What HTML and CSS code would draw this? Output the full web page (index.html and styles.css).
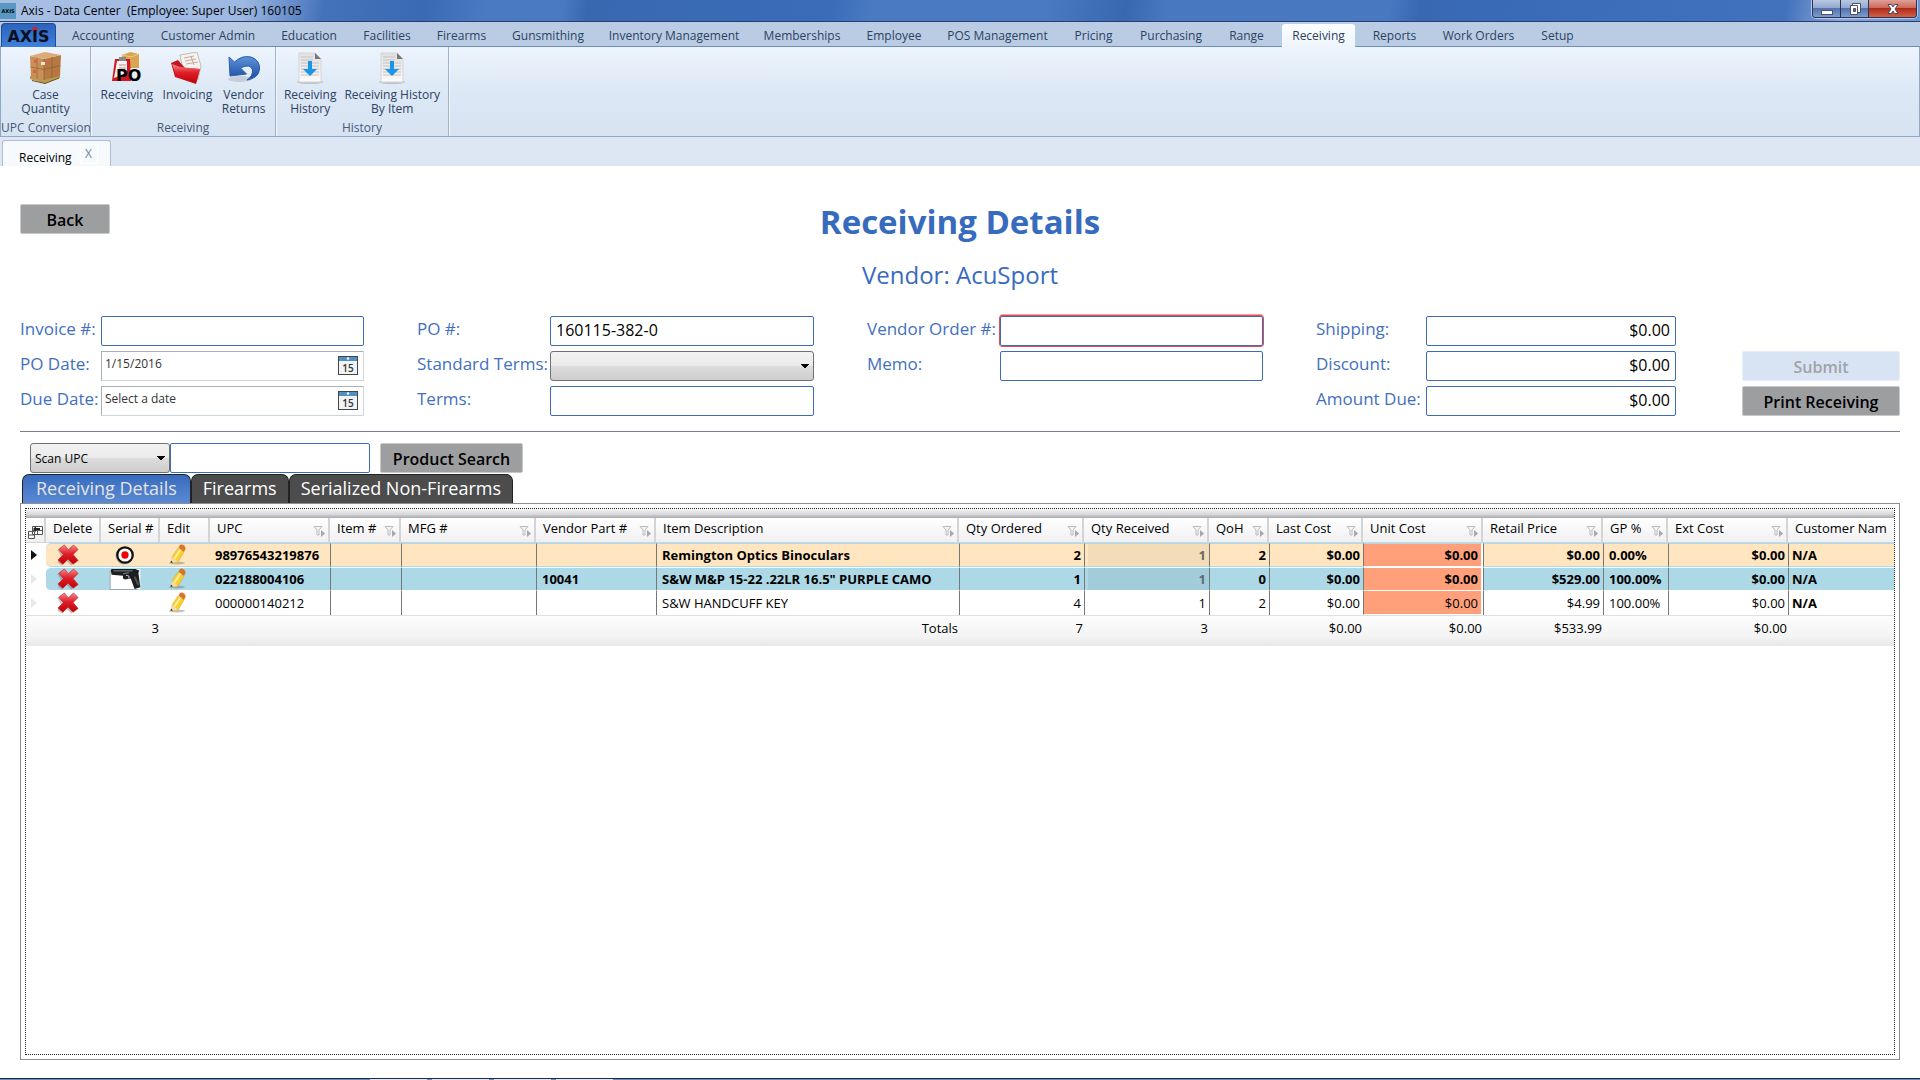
FILE: index.html
```html
<!DOCTYPE html>
<html lang="en">
<head>
    <meta charset="utf-8">
    <title>Axis - Data Center</title>
    <meta name="viewport" content="width=device-width, initial-scale=1">
    <link rel="stylesheet" href="styles.css">
</head>
<body>
    <!-- shared icons -->
    <svg class="defs" width="0" height="0" aria-hidden="true">
        <defs>
            <linearGradient id="gred" x1="0" y1="0" x2="0" y2="1">
                <stop offset="0" stop-color="#f58a90"/><stop offset=".45" stop-color="#e02028"/><stop offset="1" stop-color="#c00008"/>
            </linearGradient>
            <linearGradient id="gblue" x1="0" y1="0" x2="0" y2="1">
                <stop offset="0" stop-color="#5c94dc"/><stop offset="1" stop-color="#1c4a9c"/>
            </linearGradient>
            <linearGradient id="gpage" x1="0" y1="0" x2="0" y2="1">
                <stop offset="0" stop-color="#e0e0e0"/><stop offset="1" stop-color="#fafafa"/>
            </linearGradient>
        </defs>
        <symbol id="filter" viewBox="0 0 12 12">
            <path d="M1 1.500h8L6 5v5H4V5z" fill="#f4f4f4" stroke="#bcbcbc"/>
            <path d="M8 5l4 3.500-4 3.500z" fill="#a8a8a8"/>
        </symbol>
        <symbol id="del" viewBox="0 0 26 24">
            <path d="M3 5l5-4 5 6 5-6 5 4-5 7 5 6-5 4-5-5-5 5-5-3 4-7z" fill="#777" opacity=".45" transform="translate(-1.500 1.500)"/>
            <path d="M3 6L9 1l4.500 5.500L19 1l5 5-5.500 5.500L24 18l-5.500 4L13 16.500 7.500 22 2 17.500l6-6z" fill="url(#gred)" stroke="#cf1c24" stroke-width=".7"/>
        </symbol>
        <symbol id="pencil" viewBox="0 0 20 22">
            <ellipse cx="8" cy="19" rx="8" ry="1.500" fill="#777" opacity=".45"/>
            <path d="M3 13l6-9 6 4-6 10-6 1z" fill="#f9d030" stroke="#e0a820" stroke-width=".6"/>
            <path d="M5.500 14.500l6-9" stroke="#fff0a0" stroke-width="2"/>
            <path d="M9.500 3.500l1.500-2.500q2-1 4 .5t1.500 3.500L15 8z" fill="#dc7426"/>
            <path d="M3 13l-1.500 6L9 18z" fill="#f4dcae"/>
            <path d="M2 16.500L1.500 19 4 18.500z" fill="#333"/>
        </symbol>
        <symbol id="history" viewBox="0 0 32 32">
            <ellipse cx="16" cy="30" rx="13" ry="2" fill="#777" opacity=".35"/>
            <path d="M5 1h16l6 6v23H5z" fill="url(#gpage)" stroke="#d6d6d6"/>
            <path d="M21 1v6h6z" fill="#777"/>
            <path d="M7 5h12M7 8h12M7 11h18M7 14h18M7 17h18M7 20h18M7 23h18" stroke="#c4c4c4"/>
            <path d="M14 9h4v8h5l-7 7-7-7h5z" fill="#1c94e8"/>
        </symbol>
        <symbol id="cal" viewBox="0 0 20 19">
            <rect x=".5" y=".5" width="19" height="18" fill="#f1f3f5" stroke="#444"/>
            <rect x="1" y="1" width="18" height="4" fill="#5090c4"/>
            <circle cx="10" cy="2.500" r="1.200" fill="#fff"/>
            <text x="10" y="15.500" text-anchor="middle" class="cal-day">15</text>
        </symbol>
    </svg>

    <div class="titlebar">
        <span class="app-icon">AXIS</span>
        <span class="app-title">Axis - Data Center&nbsp; (Employee: Super User) 160105</span>
        <div class="win-btns">
            <button class="win-min" aria-label="Minimize"><svg width="12" height="14"><rect x=".5" y="8.500" width="11" height="4" fill="#fff" stroke="#4a5168"/></svg></button>
            <button class="win-max" aria-label="Restore"><svg width="12" height="14"><path d="M3.500 1.500h8v9h-8z" fill="#fff" stroke="#4a5168"/><path d="M1.500 3.500h7v9h-7z" fill="#fff" stroke="#4a5168"/><path d="M4.500 6.500h2v3h-2z" fill="#4a6ca8" stroke="#4a5168"/></svg></button>
            <button class="win-close" aria-label="Close"><svg width="14" height="12"><path d="M2 1.500h3.500L7 4l1.500-2.500H12L9 6l3 4.500H8.500L7 8l-1.500 2.500H2L5 6z" fill="#fff" stroke="#4a4858"/></svg></button>
        </div>
    </div>

    <nav class="menu">
        <a href="#" class="logo">AX<i>I</i>S</a>
        <a href="#">Accounting</a>
        <a href="#">Customer Admin</a>
        <a href="#">Education</a>
        <a href="#">Facilities</a>
        <a href="#">Firearms</a>
        <a href="#">Gunsmithing</a>
        <a href="#">Inventory Management</a>
        <a href="#">Memberships</a>
        <a href="#">Employee</a>
        <a href="#">POS Management</a>
        <a href="#">Pricing</a>
        <a href="#">Purchasing</a>
        <a href="#">Range</a>
        <a href="#" class="active">Receiving</a>
        <a href="#">Reports</a>
        <a href="#">Work Orders</a>
        <a href="#">Setup</a>
    </nav>

    <div class="ribbon">
        <div class="group g-upc">
            <div class="tools">
                <button>
                    <svg width="32" height="32" viewBox="0 0 32 32"><path d="M1 27l15 4.500L31 26v-2H1z" fill="#b89a50"/><path d="M3 28.500l13 3L30 26" fill="none" stroke="#6a5420"/><path d="M1 4l14 3v21L2 25z" fill="#c98f58"/><path d="M15 7l17-4-1 21-16 4z" fill="#b57a44"/><path d="M1 4L16 0l16 3-17 4z" fill="#dcaa74"/><path d="M1.500 15L15 17.500 31.500 13.500M8 5.500v21M23 5v21M15 7v21" stroke="#8c5828" stroke-opacity=".6" fill="none"/><path d="M5 8h3v3H5zM18 9h3v3h-3zM25 18h3v3h-3zM4 18h3v3H4z" fill="#cf6840"/><path d="M12 10h4v3h-4z" fill="#eee4d8"/></svg>
                    Case<br>Quantity
                </button>
            </div>
            <div class="caption">UPC Conversion</div>
        </div>
        <div class="group g-rec">
            <div class="tools">
                <button>
                    <svg width="32" height="32" viewBox="0 0 32 32"><path d="M11 3l8-3 9 2v14H12z" fill="#d9a550"/><path d="M11 3l9 2 8-3" stroke="#f0cb84" fill="none"/><path d="M4 7l15 0 1 22H1z" fill="#d01820"/><path d="M6 9h10v12l-13 5z" fill="#f8f4f4"/><path d="M8 5h7v4H8z" fill="#888"/><path d="M8 13h7M8 16h7" stroke="#c88"/><text x="5" y="29" class="po">PO</text></svg>
                    Receiving
                </button>
                <button>
                    <svg width="32" height="32" viewBox="0 0 32 32"><path d="M9 3l17-3 4 14-3 14-15-10z" fill="#f5f2ee" stroke="#c4bcb8"/><path d="M13 6l10-2M14 9l11-2M15 12l12-2M20 4l3 9" stroke="#c9a8a0"/><path d="M0 11l7-3 7 8 15 1-4 15L4 25z" fill="#c4141c"/><path d="M1 12l8 3 20 2-4 14L5 24z" fill="url(#gred)"/></svg>
                    Invoicing
                </button>
                <button>
                    <svg width="32" height="32" viewBox="0 0 32 32"><ellipse cx="12" cy="27" rx="12" ry="3" fill="#889" opacity=".3"/><path d="M1 5l5.500 5Q14 3 23 5q9 3 8.500 12T19 28q6-4 5.500-10-2-7-12-2l6 6L2 24z" fill="url(#gblue)" stroke="#2a5cb0"/></svg>
                    Vendor<br>Returns
                </button>
            </div>
            <div class="caption">Receiving</div>
        </div>
        <div class="group g-hist">
            <div class="tools">
                <button><svg width="32" height="32"><use href="#history"/></svg>Receiving<br>History</button>
                <button><svg width="32" height="32"><use href="#history"/></svg>Receiving History<br>By Item</button>
            </div>
            <div class="caption">History</div>
        </div>
    </div>

    <div class="doc-tabs">
        <div class="doc-tab">Receiving <button aria-label="Close tab">X</button></div>
    </div>

    <main>
        <div class="head">
            <button class="btn back">Back</button>
            <h1>Receiving Details</h1>
        </div>
        <h2>Vendor: AcuSport</h2>

        <form class="details">
            <div class="fields f1">
                <label for="invoice">Invoice #:</label>
                <input type="text" id="invoice">
                <label for="podate">PO Date:</label>
                <div class="date"><input type="text" id="podate" value="1/15/2016"><button type="button" aria-label="Pick PO date"><svg width="20" height="19"><use href="#cal"/></svg></button></div>
                <label for="duedate">Due Date:</label>
                <div class="date"><input type="text" id="duedate" value="Select a date"><button type="button" aria-label="Pick due date"><svg width="20" height="19"><use href="#cal"/></svg></button></div>
            </div>
            <div class="fields f2">
                <label for="po">PO #:</label>
                <input type="text" id="po" value="160115-382-0">
                <label for="stdterms">Standard Terms:</label>
                <select id="stdterms"><option></option></select>
                <label for="terms">Terms:</label>
                <input type="text" id="terms">
            </div>
            <div class="fields f2">
                <label for="vorder">Vendor Order #:</label>
                <input type="text" id="vorder" class="invalid">
                <label for="memo">Memo:</label>
                <input type="text" id="memo">
            </div>
            <div class="fields f3">
                <label for="shipping">Shipping:</label>
                <input type="text" id="shipping" value="$0.00">
                <label for="discount">Discount:</label>
                <input type="text" id="discount" value="$0.00">
                <label for="amount">Amount Due:</label>
                <input type="text" id="amount" value="$0.00">
            </div>
            <div class="actions">
                <button type="button" class="btn" disabled>Submit</button>
                <button type="button" class="btn">Print Receiving</button>
            </div>
        </form>

        <div class="search">
            <select aria-label="Search by"><option>Scan UPC</option></select>
            <input type="text" aria-label="UPC">
            <button class="btn">Product Search</button>
        </div>

        <div class="tabs">
            <button class="on">Receiving Details</button>
            <button>Firearms</button>
            <button>Serialized Non-Firearms</button>
        </div>

        <div class="panel">
            <div class="grid">
                <div class="strip"></div>
                <table>
                    <colgroup>
                        <col class="w20"><col class="w55"><col class="w59"><col class="w50"><col class="w120"><col class="w71"><col class="w135"><col class="w120"><col>
                        <col class="w125"><col class="w125"><col class="w60"><col class="w94"><col class="w120"><col class="w120"><col class="w65"><col class="w120"><col class="w106">
                    </colgroup>
                    <thead>
                        <tr>
                            <th class="pick"><svg width="15" height="15" viewBox="0 0 15 15"><path d="M4.500 2.500h10v8h-10zM4.500 6.500h10M9.500 6v4.500M.5 7.500h6v7h-6zM.5 11h6" fill="#fff" stroke="#555"/><path d="M5 5l3-3v2h4v2H8v2z" fill="#222"/></svg></th>
                            <th>Delete</th>
                            <th>Serial #</th>
                            <th>Edit</th>
                            <th>UPC<svg><use href="#filter"/></svg></th>
                            <th>Item #<svg><use href="#filter"/></svg></th>
                            <th>MFG #<svg><use href="#filter"/></svg></th>
                            <th>Vendor Part #<svg><use href="#filter"/></svg></th>
                            <th>Item Description<svg><use href="#filter"/></svg></th>
                            <th>Qty Ordered<svg><use href="#filter"/></svg></th>
                            <th>Qty Received<svg><use href="#filter"/></svg></th>
                            <th>QoH<svg><use href="#filter"/></svg></th>
                            <th>Last Cost<svg><use href="#filter"/></svg></th>
                            <th>Unit Cost<svg><use href="#filter"/></svg></th>
                            <th>Retail Price<svg><use href="#filter"/></svg></th>
                            <th>GP %<svg><use href="#filter"/></svg></th>
                            <th>Ext Cost<svg><use href="#filter"/></svg></th>
                            <th>Customer Nam</th>
                        </tr>
                    </thead>
                    <tbody>
                        <tr class="current">
                            <td class="mark"><svg width="6" height="10"><path d="M0 0l6 5-6 5z" fill="#111"/></svg></td>
                            <td class="ic first"><button aria-label="Delete"><svg width="24" height="22"><use href="#del"/></svg></button></td>
                            <td class="ic"><svg width="20" height="20" viewBox="0 0 22 22"><circle cx="10" cy="12" r="9.500" fill="#777" opacity=".4"/><circle cx="11" cy="11" r="8.500" fill="#fff" stroke="#111" stroke-width="2.500"/><circle cx="11" cy="11" r="4" fill="#f00000"/></svg></td>
                            <td class="ic"><button aria-label="Edit"><svg width="20" height="22"><use href="#pencil"/></svg></button></td>
                            <td class="upc"><div>98976543219876</div></td>
                            <td class="ln"></td><td class="ln"></td><td class="ln"></td>
                            <td class="ln">Remington Optics Binoculars</td>
                            <td class="ln num">2</td>
                            <td class="ln num ro">1</td>
                            <td class="ln num">2</td>
                            <td class="ln num">$0.00</td>
                            <td class="ln num unit">$0.00</td>
                            <td class="ln num">$0.00</td>
                            <td class="ln gp">0.00%</td>
                            <td class="ln num">$0.00</td>
                            <td class="ln cust">N/A</td>
                        </tr>
                        <tr class="firearm">
                            <td class="mark"><svg width="6" height="10"><path d="M0 0l6 5-6 5z" fill="#e8e8e8"/></svg></td>
                            <td class="ic first"><button aria-label="Delete"><svg width="24" height="22"><use href="#del"/></svg></button></td>
                            <td class="ic"><svg width="32" height="22" viewBox="0 0 32 23"><path d="M0 3h29v20H0z" fill="#777" opacity=".5"/><path d="M1 1h31v21H1z" fill="#fff"/><path d="M1 2l1-1h25l4 2-1 2 2 15-6 2-4-11-6 1q-3-1-2-4L2 7z" fill="#1c1e20"/><path d="M4 3h20M14 6l6-1" stroke="#889"/><path d="M17 8q4-1 3 3" fill="none" stroke="#ddd"/><path d="M26 9l4 9" stroke="#555" stroke-width="2"/></svg></td>
                            <td class="ic"><button aria-label="Edit"><svg width="20" height="22"><use href="#pencil"/></svg></button></td>
                            <td class="upc"><div>022188004106</div></td>
                            <td class="ln"></td><td class="ln"></td>
                            <td class="ln">10041</td>
                            <td class="ln">S&amp;W M&amp;P 15-22 .22LR 16.5" PURPLE CAMO</td>
                            <td class="ln num">1</td>
                            <td class="ln num ro">1</td>
                            <td class="ln num">0</td>
                            <td class="ln num">$0.00</td>
                            <td class="ln num unit">$0.00</td>
                            <td class="ln num">$529.00</td>
                            <td class="ln gp">100.00%</td>
                            <td class="ln num">$0.00</td>
                            <td class="ln cust">N/A</td>
                        </tr>
                        <tr>
                            <td class="mark"><svg width="6" height="10"><path d="M0 0l6 5-6 5z" fill="#e8e8e8"/></svg></td>
                            <td class="ic first"><button aria-label="Delete"><svg width="24" height="22"><use href="#del"/></svg></button></td>
                            <td class="ic"></td>
                            <td class="ic"><button aria-label="Edit"><svg width="20" height="22"><use href="#pencil"/></svg></button></td>
                            <td class="upc"><div>000000140212</div></td>
                            <td class="ln"></td><td class="ln"></td><td class="ln"></td>
                            <td class="ln">S&amp;W HANDCUFF KEY</td>
                            <td class="ln num">4</td>
                            <td class="ln num">1</td>
                            <td class="ln num">2</td>
                            <td class="ln num">$0.00</td>
                            <td class="ln num unit">$0.00</td>
                            <td class="ln num">$4.99</td>
                            <td class="ln gp">100.00%</td>
                            <td class="ln num">$0.00</td>
                            <td class="ln cust">N/A</td>
                        </tr>
                    </tbody>
                    <tfoot>
                        <tr>
                            <td></td><td></td><td>3</td><td></td><td></td><td></td><td></td><td></td>
                            <td>Totals</td><td>7</td><td>3</td><td></td><td>$0.00</td><td>$0.00</td><td>$533.99</td><td></td><td>$0.00</td><td></td>
                        </tr>
                    </tfoot>
                </table>
            </div>
        </div>
    </main>
    <div class="taskbar"><span></span><span></span><span></span><span></span></div>
</body>
</html>
```
FILE: styles.css
```css
* {
    box-sizing: border-box;
}

body {
    margin: 0;
    min-height: 100vh;
    display: flex;
    flex-direction: column;
    font-family: "Open Sans", "Noto Sans", sans-serif;
    font-size: 12px;
    color: #000;
    background: #fff;
}

button, input, select {
    font-family: inherit;
    margin: 0;
}

a {
    text-decoration: none;
}

.defs {
    position: absolute;
}

/* title bar */
.titlebar {
    height: 22px;
    display: flex;
    align-items: flex-start;
    border-bottom: 1px solid #2c3c6c;
    background: linear-gradient(100deg, #a9c0e4 0, #9db8e2 240px, #4472ba 320px, #3a6ab4 420px, #4a7ac2 480px, #4a7ac2 555px, #3868b0 580px, #3a6cb8 820px, #4a7ac2 860px, #4a7ac2 1030px, #3868b0 1110px, #4878c0 1150px, #4878c0 1370px, #3868b2 1400px, #3c6eba 1600px, #4272bc 1760px, #8aa8d8 1815px, #6c94d0 100%);
}

.app-icon {
    width: 16px;
    height: 16px;
    margin: 3px 5px 0 0;
    background: #5a98c4;
    font: bold 5px/16px "DejaVu Sans", sans-serif;
    text-align: center;
}

.app-title {
    flex: 1;
    line-height: 22px;
}

.win-btns {
    display: flex;
    height: 18px;
    margin-right: 3px;
    border: 1px solid #2a3450;
    border-top: 0;
    border-radius: 0 0 4px 4px;
    overflow: hidden;
    box-shadow: 0 0 0 1px #b4c8e8;
}

.win-btns button {
    width: 28px;
    padding: 0;
    border: 0;
    border-right: 1px solid #2a3450;
    background: linear-gradient(#b8c8e0 0, #93a9d0 45%, #5473ac 50%, #7c9cd0 100%);
    line-height: 0;
}

.win-btns .win-close {
    width: 47px;
    border-right: 0;
    background: linear-gradient(#e0a098 0, #cc6a5c 45%, #b02c18 50%, #d06048 100%);
}

/* module menu */
.menu {
    display: grid;
    grid-template-columns: 58px 90px 120px 82px 74px 75px 98px 154px 102px 82px 125px 67px 88px 63px 81px 71px 97px 61px;
    height: 25px;
    background: #bacce4;
    border-bottom: 1px solid #6f8db4;
}

.menu a {
    color: #2b4263;
    line-height: 28px;
    text-align: center;
    white-space: nowrap;
}

.menu .logo {
    width: 55px;
    height: 24px;
    margin: 1px 0 0 1px;
    border: 1px solid #1c4c9c;
    border-bottom: 0;
    border-radius: 4px 4px 0 0;
    background: linear-gradient(#2c64bc, #3f80dc);
    color: #0c1020;
    font: bold 16px/26px "DejaVu Sans", sans-serif;
}

.menu .logo i {
    font-style: normal;
    background: radial-gradient(circle at 50% 2px, #d02030 2px, transparent 3px);
}

.menu .active {
    height: 24px;
    margin: 2px 4px 0 4px;
    line-height: 24px;
    background: linear-gradient(#fdfeff, #edf4fc);
    border-radius: 3px 3px 0 0;
    box-shadow: 0 0 2px #98e0ee;
}

/* ribbon */
.ribbon {
    display: flex;
    height: 90px;
    border: 1px solid #92a8ca;
    border-top: 0;
    background: linear-gradient(#edf4fd 0, #dce8f5 50%, #d7e3f0 100%);
}

.group {
    display: flex;
    flex-direction: column;
    justify-content: space-between;
    border-right: 1px solid #9db2d0;
    box-shadow: 1px 0 0 #f4f8fd;
}

.g-upc {
    width: 90px;
}

.g-rec {
    width: 185px;
}

.g-hist {
    width: 173px;
}

.tools {
    display: flex;
    align-items: flex-start;
    justify-content: space-evenly;
}

.tools button {
    padding: 5px 0 0;
    border: 0;
    background: none;
    color: #2b4263;
    font-size: 12px;
    line-height: 14px;
    white-space: nowrap;
}

.tools svg {
    display: block;
    margin: 0 auto 4px;
}

.po {
    font: bold 16px "DejaVu Sans", sans-serif;
}

.caption {
    height: 17px;
    line-height: 17px;
    text-align: center;
    white-space: nowrap;
    color: #47597c;
}

/* open documents */
.doc-tabs {
    height: 29px;
    padding: 3px 2px 0;
    background: #dde7f3;
}

.doc-tab {
    display: flex;
    width: 109px;
    height: 26px;
    padding-left: 16px;
    gap: 8px;
    border: 1px solid #aebfd4;
    border-bottom: 0;
    border-radius: 3px 3px 0 0;
    background: #f6fafd;
    line-height: 34px;
}

.doc-tab button {
    width: 18px;
    height: 20px;
    margin-top: 3px;
    padding: 0;
    border: 1px solid #fff;
    background: none;
    color: #72869e;
    font-size: 12px;
    line-height: 18px;
}

/* page */
main {
    flex: 1;
    display: flex;
    flex-direction: column;
    padding: 34px 20px 18px;
}

.btn {
    height: 30px;
    padding: 2px 0 0;
    border: 1px solid #c8c8c8;
    border-radius: 2px;
    background: #9d9ea0;
    color: #000;
    font-size: 16px;
    font-weight: 600;
    line-height: 20px;
    white-space: nowrap;
}

.btn:disabled {
    background: #d8e4f4;
    border-color: #e8eef8;
    color: #a0a2a6;
}

.head {
    display: grid;
    grid-template-columns: 90px 1fr 90px;
    align-items: start;
}

.head .back {
    margin-top: 4px;
}

h1, h2 {
    margin: 0;
    color: #376bbd;
    text-align: center;
}

h1 {
    font-size: 33px;
    line-height: 44px;
}

h2 {
    margin: 14px 0 24px;
    font-size: 24px;
    font-weight: 400;
    line-height: 34px;
}

.details {
    display: grid;
    grid-template-columns: 344fr 397fr 396fr 360fr 171fr;
    column-gap: 53px;
    padding-bottom: 15px;
    border-bottom: 1px solid #7c7c8c;
}

.fields {
    display: grid;
    grid-auto-rows: 30px;
    align-content: start;
    row-gap: 5px;
}

.f1 {
    grid-template-columns: 81px 1fr;
}

.f2 {
    grid-template-columns: 133px 1fr;
}

.f3 {
    grid-template-columns: 110px 1fr;
}

.fields label {
    color: #4270be;
    font-size: 17px;
    line-height: 26px;
    white-space: nowrap;
}

.fields > input, .search input {
    width: 100%;
    height: 30px;
    padding: 0 5px 2px;
    border: 1px solid #3c6cb8;
    border-radius: 2px;
    background: #fff;
    font-size: 16px;
}

.fields > .invalid {
    outline: 1px solid #e84c50;
    box-shadow: 0 -2px 0 #f8a0a0;
}

.f3 > input {
    text-align: right;
}

.date {
    display: flex;
    align-items: flex-start;
    border: 1px solid #a8b0b8;
    border-right-color: #ccd4dc;
    border-bottom-color: #ccd4dc;
    border-radius: 1px;
}

.date input {
    flex: 1;
    min-width: 0;
    height: 24px;
    padding: 0 3px 1px;
    border: 0;
    background: none;
    color: #333;
    font-size: 12px;
}

.date button {
    padding: 4px 5px 0 0;
    border: 0;
    background: none;
    line-height: 0;
}

.cal-day {
    font: 600 10px "Open Sans", sans-serif;
    fill: #333;
}

select {
    appearance: none;
    height: 30px;
    padding: 0 6px 0 4px;
    border: 1px solid #707070;
    border-radius: 3px;
    background:
        linear-gradient(to top right, transparent 50%, #000 50%) right 8px center / 4px 5px no-repeat,
        linear-gradient(to top left, transparent 50%, #000 50%) right 4px center / 4px 5px no-repeat,
        linear-gradient(#f2f2f2 0, #ebebeb 48%, #dddddd 50%, #cdcdcd 100%);
    color: #000;
    font-size: 12px;
}

.actions {
    display: flex;
    flex-direction: column;
    gap: 5px;
    padding: 35px 0 0 13px;
}

.search {
    display: flex;
    padding: 11px 0 0 10px;
}

.search select {
    width: 140px;
}

.search input {
    width: 200px;
}

.search .btn {
    width: 143px;
    margin-left: 10px;
}

/* tabs */
.tabs {
    display: flex;
    padding: 1px 2px 0;
}

.tabs button {
    height: 29px;
    padding: 0 11px 2px;
    border: 1px solid #222;
    border-bottom: 0;
    border-radius: 7px 7px 0 0;
    background: #4c4c4c;
    color: #fff;
    font-size: 18px;
    line-height: 26px;
    white-space: nowrap;
}

.tabs .on {
    padding: 0 13px 2px;
    background: linear-gradient(#376bbd, #5c8ad4);
    color: #e4e4e4;
}

.panel {
    flex: 1;
    display: flex;
    padding: 4px;
    border: 1px solid #8c8e90;
}

.grid {
    flex: 1;
    min-width: 0;
    border: 1px dotted #222;
}

.strip {
    height: 9px;
    background: linear-gradient(#f4f4f6 0, #d8d8da 60%, #c4c4c8 75%, #a8a8ae 100%);
}

/* items */
table {
    width: 100%;
    table-layout: fixed;
    border-collapse: separate;
    border-spacing: 0;
    font-size: 13px;
}

.w20 { width: 20px; }
.w50 { width: 50px; }
.w55 { width: 55px; }
.w59 { width: 59px; }
.w60 { width: 60px; }
.w65 { width: 65px; }
.w71 { width: 71px; }
.w94 { width: 94px; }
.w106 { width: 106px; }
.w120 { width: 120px; }
.w125 { width: 125px; }
.w135 { width: 135px; }

th {
    height: 25px;
    padding: 0 0 4px 7px;
    border-right: 2px solid #d4d4d4;
    border-bottom: 1px solid #d4d4d4;
    background: linear-gradient(#fff, #f0f0f2);
    font-size: 13px;
    font-weight: 400;
    line-height: 19px;
    text-align: left;
    white-space: nowrap;
    overflow: hidden;
}

th svg {
    float: right;
    width: 12px;
    height: 12px;
    margin: 6px 3px 0 0;
}

th.pick {
    padding: 0;
}

th.pick svg {
    float: none;
    display: block;
    width: 15px;
    height: 15px;
    margin: 2px 0 0 2px;
}

th:last-child {
    border-right: 0;
}

td {
    height: 24px;
    padding: 0 5px;
    line-height: 20px;
    white-space: nowrap;
    overflow: hidden;
}

td.mark {
    padding: 0 0 0 5px;
}

td.mark svg {
    display: block;
}

td.ic {
    padding: 0 12px 0 0;
    line-height: 0;
    text-align: center;
}

td.ic button {
    display: block;
    margin: 0 auto;
    padding: 0;
    border: 0;
    background: none;
    line-height: 0;
}

td.first {
    border-radius: 5px 0 0 5px;
}

td.upc div {
    width: 111px;
    overflow: hidden;
}

td.ln {
    border-left: 1px solid #777;
}

td.num {
    padding: 0 3px;
    text-align: right;
}

td.gp {
    padding: 0 0 0 5px;
}

td.cust {
    padding: 0 3px;
    font-weight: 700;
}

.current td, .firearm td {
    font-weight: 700;
}

.current td:not(.mark) {
    background: #ffe6c0;
    border-top: 1px solid #a4dcf4;
    border-bottom: 1px solid #a4dcf4;
}

.firearm td:not(.mark) {
    background: #add8e6;
    border-top: 1px solid #fff;
    border-bottom: 1px solid #fff;
}

.current td.ro:not(.mark) {
    color: #6e6a64;
    background: #f3dcb8;
    box-shadow: inset 3px 0 0 #ffe6c0;
}

.firearm td.ro:not(.mark) {
    color: #5c6c74;
    background: #a2ccda;
    box-shadow: inset 3px 0 0 #add8e6;
}

tbody td.unit:not(.mark) {
    background: #ffa07a;
    border-right: 2px solid #fff;
    border-bottom: 1px solid #fff;
}

tbody tr:nth-child(n) td.unit {
    background: #ffa07a;
}

tfoot td {
    height: 31px;
    padding: 0 1px 6px 0;
    border-top: 1px solid #e0e0e0;
    background: linear-gradient(#fdfdfd, #f3f3f4 70%, #e8e8e8);
    text-align: right;
}

.taskbar {
    display: flex;
    gap: 5px;
    height: 2px;
    padding-left: 370px;
    border-top: 1px solid #1c2c4c;
    background: #6c8cc0;
}

.taskbar span {
    width: 57px;
    background: #e0e6f0;
}
```
